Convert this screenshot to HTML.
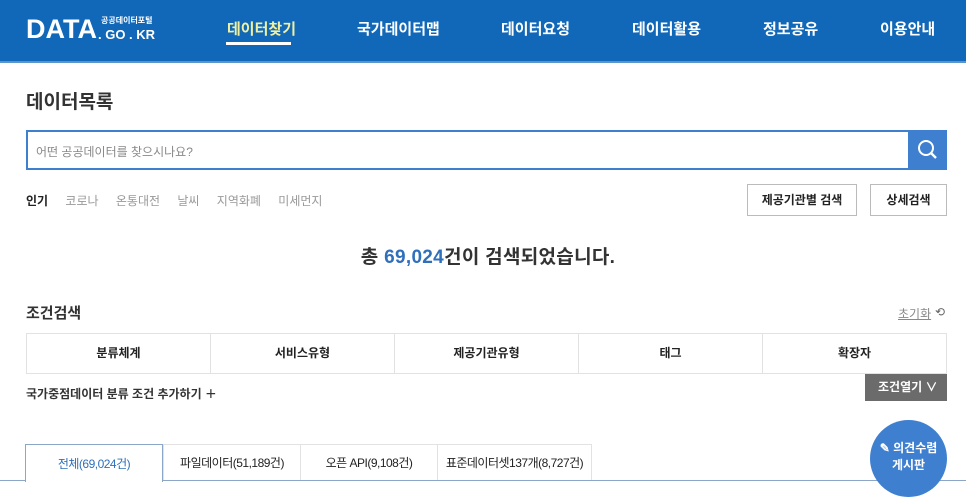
<!DOCTYPE html>
<html><head><meta charset="utf-8"><style>
*{margin:0;padding:0;box-sizing:border-box}
body{width:966px;height:487px;overflow:hidden;background:#fff;font-family:"Liberation Sans","Noto Sans CJK KR",sans-serif;color:#222;position:relative}
.hd{position:absolute;left:0;top:0;width:966px;height:63px;background:#1168b8;border-bottom:2px solid #5a94cc}
.logo{position:absolute;left:26px;top:14px;color:#fff;font-weight:bold;font-size:27px}
.logo2{position:absolute;left:101px;top:15px;color:#fff;font-size:8px;font-weight:bold}
.logo3{position:absolute;left:98px;top:27px;color:#fff;font-size:13px;font-weight:bold}
.nav{position:absolute;top:18px;color:#fff;font-size:15px;font-weight:bold}
.ul{position:absolute;left:226px;top:42px;width:65px;height:3px;background:#fff}
.a{position:absolute}
</style></head><body>
<div class="hd">
<div class="logo">DATA</div><div class="logo2">공공데이터포털</div><div class="logo3">. GO . KR</div>
<div class="nav" style="left:227px;color:#f0f0a0">데이터찾기</div><div class="ul"></div>
<div class="nav" style="left:357px">국가데이터맵</div>
<div class="nav" style="left:501px">데이터요청</div>
<div class="nav" style="left:632px">데이터활용</div>
<div class="nav" style="left:763px">정보공유</div>
<div class="nav" style="left:880px">이용안내</div>
</div>
<div class="a" style="left:26px;top:87px;font-size:19px;font-weight:bold;color:#333">데이터목록</div>
<div class="a" style="left:26px;top:130px;width:921px;height:40px;border:2px solid #3f7fd0"></div>
<div class="a" style="left:36px;top:143px;font-size:12px;color:#888">어떤 공공데이터를 찾으시나요?</div>
<div class="a" style="left:908px;top:130px;width:39px;height:40px;background:#3f7fd0"><svg width="39" height="40"><circle cx="18" cy="18" r="7" fill="none" stroke="#fff" stroke-width="2"/><line x1="23" y1="23" x2="28" y2="28" stroke="#fff" stroke-width="2.4"/></svg></div>
<div class="a" style="left:26px;top:192px;font-size:12px;color:#999;word-spacing:14px"><b style="color:#222">인기</b> 코로나 온통대전 날씨 지역화폐 미세먼지</div>
<div class="a" style="left:747px;top:184px;width:110px;height:32px;border:1px solid #bbb;font-size:12px;text-align:center;line-height:30px;font-weight:bold">제공기관별 검색</div>
<div class="a" style="left:870px;top:184px;width:77px;height:32px;border:1px solid #bbb;font-size:12px;text-align:center;line-height:30px;font-weight:bold">상세검색</div>
<div class="a" style="left:0;width:976px;top:242px;text-align:center;font-size:19px;font-weight:bold;color:#333;letter-spacing:0.3px">총 <span style="color:#2f6fbb">69,024</span>건이 검색되었습니다.</div>
<div class="a" style="left:26px;top:302px;font-size:15px;font-weight:bold;color:#333">조건검색</div>
<div class="a" style="left:898px;top:305px;font-size:12px;color:#888;text-decoration:underline">초기화 </div><div class="a" style="left:935px;top:305px;font-size:12px;color:#666">⟲</div>
<div class="a" style="left:26px;top:333px;width:921px;height:41px;border:1px solid #e2e2e2;display:flex">
<div style="flex:1;border-right:1px solid #e2e2e2;text-align:center;line-height:39px;font-size:12px;font-weight:bold">분류체계</div>
<div style="flex:1;border-right:1px solid #e2e2e2;text-align:center;line-height:39px;font-size:12px;font-weight:bold">서비스유형</div>
<div style="flex:1;border-right:1px solid #e2e2e2;text-align:center;line-height:39px;font-size:12px;font-weight:bold">제공기관유형</div>
<div style="flex:1;border-right:1px solid #e2e2e2;text-align:center;line-height:39px;font-size:12px;font-weight:bold">태그</div>
<div style="flex:1;text-align:center;line-height:39px;font-size:12px;font-weight:bold">확장자</div></div>
<div class="a" style="left:26px;top:385px;font-size:12px;font-weight:bold;color:#333">국가중점데이터 분류 조건 추가하기 ＋</div>
<div class="a" style="left:865px;top:374px;width:82px;height:27px;background:#6b6b6b;color:#fff;font-size:12px;font-weight:bold;line-height:27px;padding-left:13px">조건열기 ∨</div>
<div class="a" style="left:0;top:480px;width:966px;height:1px;background:#8ca6c8"></div>
<div class="a" style="left:25px;top:444px;width:138px;height:38px;border:1px solid #8ca6c8;border-bottom:none;background:#fff;text-align:center;line-height:38px;font-size:12px;color:#2f6fbb;letter-spacing:-0.5px">전체(69,024건)</div>
<div class="a" style="left:163px;top:444px;width:429px;height:36px;border:1px solid #e2e2e2;border-bottom:none;display:flex;font-size:12px;letter-spacing:-0.5px">
<div style="width:137px;text-align:center;line-height:36px;border-right:1px solid #e2e2e2">파일데이터(51,189건)</div>
<div style="width:137px;text-align:center;line-height:36px;border-right:1px solid #e2e2e2">오픈 API(9,108건)</div>
<div style="flex:1;text-align:center;line-height:36px">표준데이터셋137개(8,727건)</div></div>
<div class="a" style="left:870px;top:420px;width:77px;height:77px;border-radius:50%;background:#3f7fd0;color:#fff;font-size:12px;font-weight:bold;text-align:center;padding-top:20px;line-height:17px">✎ 의견수렴<br>게시판</div>
</body></html>
